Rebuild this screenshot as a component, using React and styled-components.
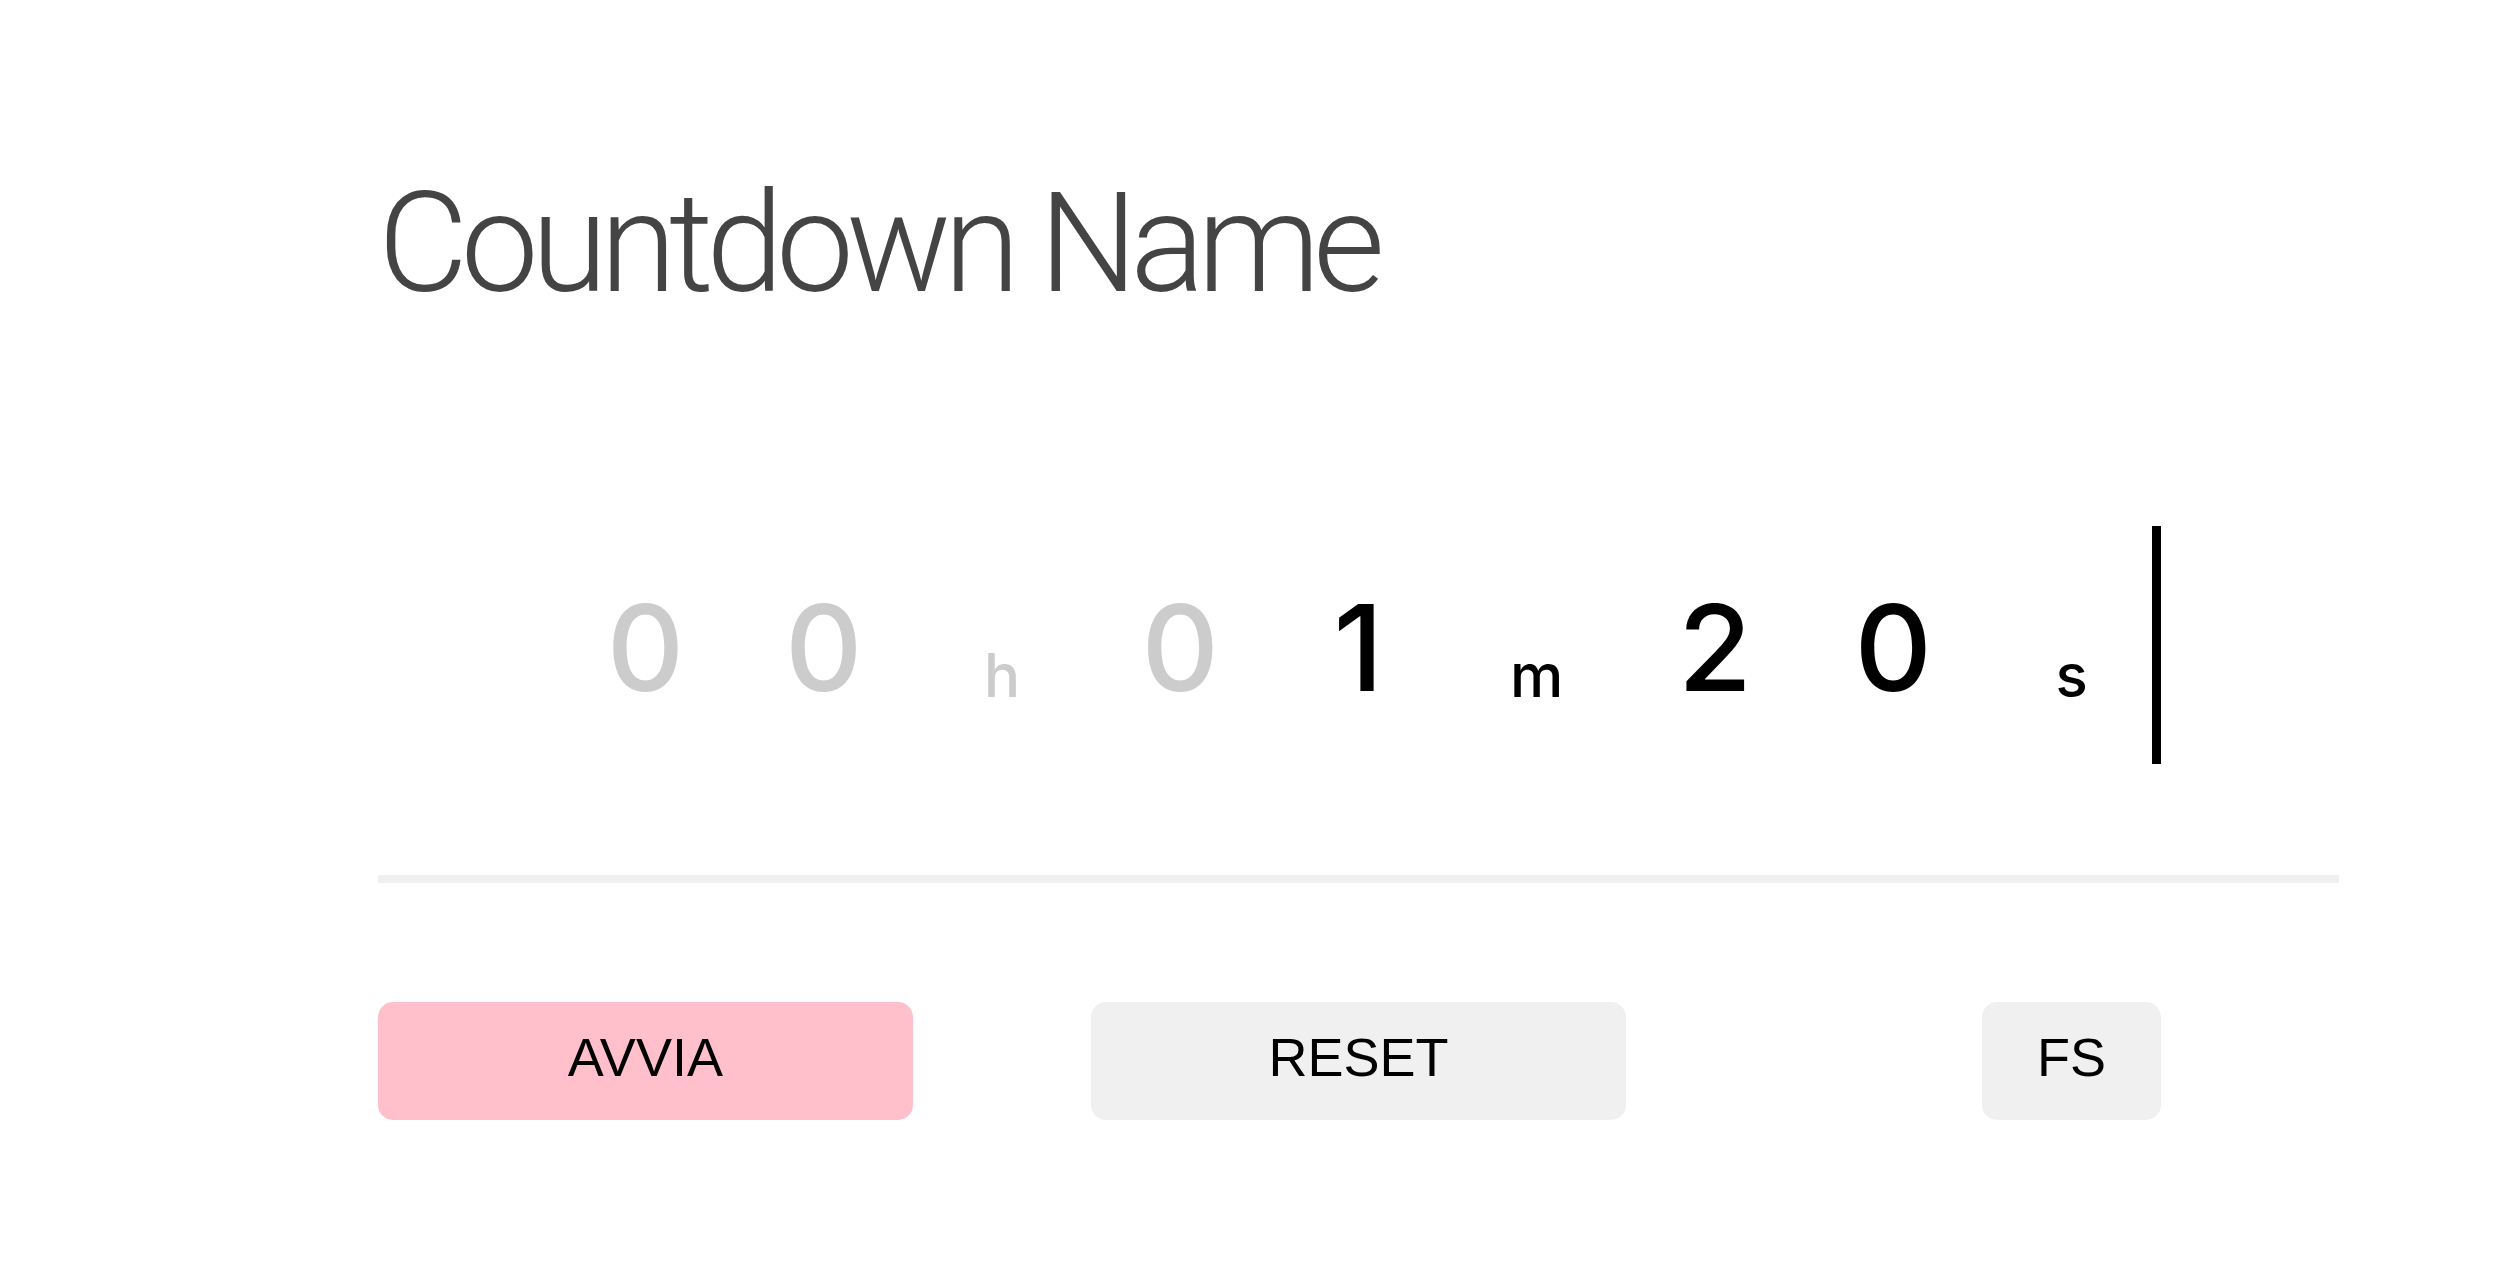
import React from "react";
import styled, { createGlobalStyle } from "styled-components";

const Global = createGlobalStyle`
  html, body { margin: 0; padding: 0; background: #ffffff; }
  body { font-family: "Inter", "Liberation Sans", sans-serif; }
`;

const Page = styled.main`
  padding: 174px 0 0 378px;
  box-sizing: border-box;
  min-height: 1286px;
`;

const Panel = styled.section`
  width: 1961px;
  display: flex;
  flex-direction: column;
`;

const Title = styled.h1`
  margin: 0;
  font-family: "Roboto", "Liberation Sans", sans-serif;
  font-weight: 300;
  font-size: 139px;
  line-height: 1;
  color: #444444;
  letter-spacing: -7.5px;
`;

const Timer = styled.div`
  margin-top: 213px;
  display: grid;
  grid-template-columns: repeat(11, 1fr);
  height: 238px;
  align-items: center;
`;

const Digit = styled.span`
  grid-column: ${(p) => p.$col};
  grid-row: 1;
  justify-self: center;
  margin-top: 6px;
  font-family: "Inter", "Liberation Sans", sans-serif;
  font-size: 120px;
  line-height: 1;
  font-weight: 500;
  color: ${(p) => (p.$dim ? "#cccccc" : "#000000")};
`;

const Unit = styled.span`
  grid-column: ${(p) => p.$col};
  grid-row: 1;
  justify-self: center;
  margin-top: 60px;
  font-family: "Inter", "Liberation Sans", sans-serif;
  font-size: 60px;
  font-weight: 500;
  line-height: 1;
  color: ${(p) => (p.$dim ? "#cccccc" : "#000000")};
`;

const Caret = styled.span`
  grid-column: 10;
  grid-row: 1;
  justify-self: end;
  align-self: stretch;
  width: 9px;
  background: #000000;
`;

const Divider = styled.hr`
  margin: 111px 0 0;
  border: 0;
  height: 8px;
  background: #f0f0f0;
`;

const Controls = styled.div`
  margin-top: 119px;
  display: grid;
  grid-template-columns: repeat(11, 1fr);
`;

const Button = styled.button`
  grid-column: ${(p) => p.$cols};
  height: 118px;
  border: 0;
  border-radius: 15px;
  background: ${(p) => (p.$primary ? "#ffc0cb" : "#f0f0f0")};
  color: #000000;
  font-family: "Liberation Sans", Arial, sans-serif;
  font-size: 54px;
  line-height: 1;
  padding: 0 0 8px;
  display: flex;
  align-items: center;
  justify-content: center;
  cursor: pointer;
`;

const cells = [
  { kind: "d", v: "0", dim: true },
  { kind: "d", v: "0", dim: true },
  { kind: "u", v: "h", dim: true },
  { kind: "d", v: "0", dim: true },
  { kind: "d", v: "1" },
  { kind: "u", v: "m" },
  { kind: "d", v: "2" },
  { kind: "d", v: "0" },
  { kind: "u", v: "s" },
];

export default function App() {
  return (
    <>
      <Global />
      <Page>
        <Panel>
          <Title>Countdown Name</Title>
          <Timer>
            {cells.map((c, i) =>
              c.kind === "d" ? (
                <Digit key={i} $col={i + 2} $dim={c.dim}>
                  {c.v}
                </Digit>
              ) : (
                <Unit key={i} $col={i + 2} $dim={c.dim}>
                  {c.v}
                </Unit>
              )
            )}
            <Caret />
          </Timer>
          <Divider />
          <Controls>
            <Button $primary $cols="1 / span 3">AVVIA</Button>
            <Button $cols="5 / span 3">RESET</Button>
            <Button $cols="10 / span 1">FS</Button>
          </Controls>
        </Panel>
      </Page>
    </>
  );
}
